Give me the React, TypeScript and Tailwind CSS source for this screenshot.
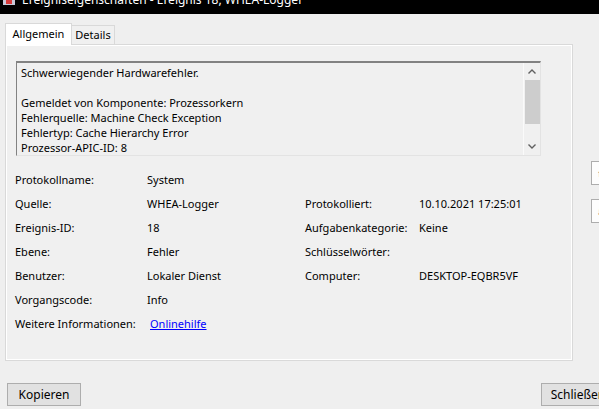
import React from "react";

const rows: { label: string; value: string; rLabel?: string; rValue?: string; link?: boolean }[] = [
  { label: "Protokollname:", value: "System" },
  { label: "Quelle:", value: "WHEA-Logger", rLabel: "Protokolliert:", rValue: "10.10.2021 17:25:01" },
  { label: "Ereignis-ID:", value: "18", rLabel: "Aufgabenkategorie:", rValue: "Keine" },
  { label: "Ebene:", value: "Fehler", rLabel: "Schlüsselwörter:", rValue: "" },
  { label: "Benutzer:", value: "Lokaler Dienst", rLabel: "Computer:", rValue: "DESKTOP-EQBR5VF" },
  { label: "Vorgangscode:", value: "Info" },
  { label: "Weitere Informationen:", value: "Onlinehilfe", link: true },
];

const description = [
  "Schwerwiegender Hardwarefehler.",
  "",
  "Gemeldet von Komponente: Prozessorkern",
  "Fehlerquelle: Machine Check Exception",
  "Fehlertyp: Cache Hierarchy Error",
  "Prozessor-APIC-ID: 8",
];

function Chevron({ up }: { up?: boolean }) {
  return (
    <svg width="8" height="5" viewBox="0 0 8 5" aria-hidden="true">
      <polyline
        points={up ? "0.5 4.5 4 1 7.5 4.5" : "0.5 0.5 4 4 7.5 0.5"}
        fill="none"
        stroke="#606060"
        strokeWidth="1.4"
      />
    </svg>
  );
}

export default function App() {
  return (
    <div
      className="w-[599px] h-[409px] overflow-hidden bg-[#efefef] text-[11px] text-black"
      style={{ fontFamily: '"Noto Sans", "Liberation Sans", sans-serif' }}
    >
      {/* Title bar, cut off at the top */}
      <div className="h-[14px] bg-black overflow-hidden flex items-start">
        <div className="ml-[3px] w-[12px] h-[5px] bg-[#c9c9d9] flex items-start justify-center shrink-0">
          <div className="w-[6px] h-[4px] bg-[#d83a3a]" />
        </div>
        <span className="ml-[7px] -mt-[8px] leading-[16px] text-[12px] text-white whitespace-nowrap">
          Ereigniseigenschaften - Ereignis 18, WHEA-Logger
        </span>
      </div>

      {/* Tabs */}
      <div className="flex items-end ml-[5px] mt-[9px] h-[21px] relative z-10">
        <div className="h-[22px] -mb-[1px] w-[67px] bg-white border border-b-0 border-[#d9d9d9] flex items-center justify-center">
          Allgemein
        </div>
        <div className="h-[19px] w-[43px] bg-[#f0f0f0] border border-l-0 border-b-0 border-[#d9d9d9] flex items-center justify-center">
          Details
        </div>
      </div>

      <div className="flex">
        {/* Tab panel */}
        <div className="ml-[5px] w-[568px] shrink-0 h-[317px] border border-[#d9d9d9] bg-[#f0f0f0] shadow-[inset_1px_1px_0_#ffffff,inset_-1px_-1px_0_#ffffff] px-[10px] pt-[16px]">
          {/* Description box */}
          <div className="w-[525px] h-[95px] flex border-t-2 border-l border-t-[#828282] border-l-[#828282] border-b border-r border-b-[#e3e3e3] border-r-[#e3e3e3] bg-[#f0f0f0]">
            <div className="flex-1 pl-[4px] pt-[2px] leading-[15px] overflow-hidden">
              {description.map((l, i) => (
                <div key={i} className="h-[15px] whitespace-nowrap">
                  {l}
                </div>
              ))}
            </div>
            <div className="w-[17px] bg-[#f0f0f0] border-l border-[#fafafa] flex flex-col items-center">
              <div className="h-[17px] flex items-center justify-center">
                <Chevron up />
              </div>
              <div className="w-[15px] h-[44px] bg-[#cdcdcd]" />
              <div className="flex-1" />
              <div className="h-[17px] flex items-center justify-center">
                <Chevron />
              </div>
            </div>
          </div>

          {/* Properties */}
          <div className="mt-[12px] ml-[-1px]">
            {rows.map((r) => (
              <div key={r.label} className="flex h-[24px] items-center whitespace-nowrap">
                <span className="w-[132px] shrink-0">{r.label}</span>
                {r.link ? (
                  <span className="ml-[3px] w-[155px] shrink-0 text-[#0000ff] underline">{r.value}</span>
                ) : (
                  <span className="w-[158px] shrink-0">{r.value}</span>
                )}
                {r.rLabel && <span className="w-[114px] shrink-0">{r.rLabel}</span>}
                {r.rValue && <span>{r.rValue}</span>}
              </div>
            ))}
          </div>
        </div>

        {/* Side buttons, cut off at the right edge */}
        <div className="ml-[18px] pt-[117px] flex flex-col gap-[14px] shrink-0">
          <div className="w-[30px] h-[24px] border border-[#adadad] bg-[#fdfdfd] flex items-center pl-[5px] text-[10px] font-bold">
            ↑
          </div>
          <div className="w-[30px] h-[24px] border border-[#adadad] bg-[#fdfdfd] flex items-center pl-[5px] text-[10px] font-bold">
            ↓
          </div>
        </div>
      </div>

      {/* Bottom buttons */}
      <div className="flex justify-between mt-[22px] pl-[7px]">
        <button className="w-[74px] h-[23px] bg-[#e1e1e1] border border-[#adadad] flex items-center justify-center text-[12px]">
          Kopieren
        </button>
        <button className="w-[74px] h-[23px] -mr-[16px] bg-[#e1e1e1] border border-[#adadad] flex items-center justify-center text-[12px]">
          Schließen
        </button>
      </div>
    </div>
  );
}
